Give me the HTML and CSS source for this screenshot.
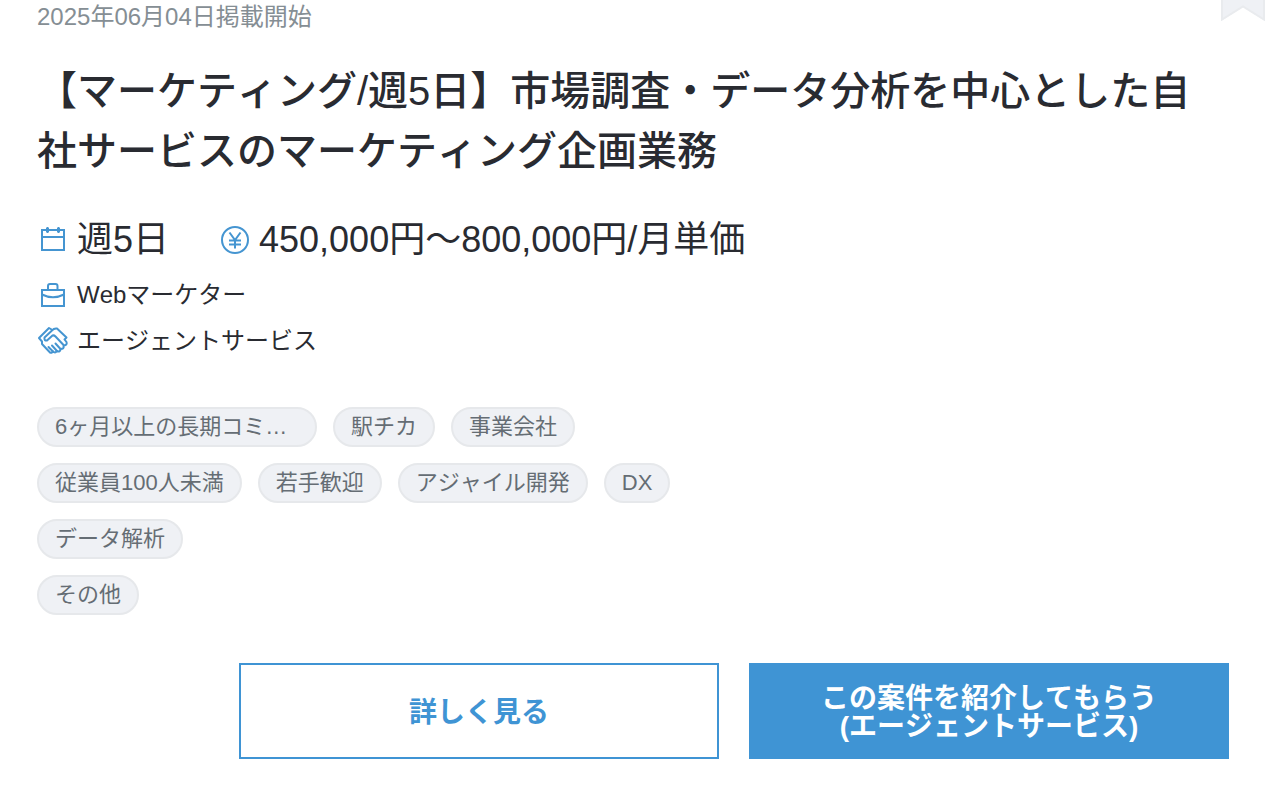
FILE: index.html
```html
<!DOCTYPE html>
<html lang="ja">

<head>
    <meta charset="UTF-8">
    <meta name="viewport" content="width=device-width, initial-scale=1.0">
    <title>【マーケティング/週5日】市場調査・データ分析を中心とした自社サービスのマーケティング企画業務</title>
    <link rel="stylesheet" href="styles.css">
</head>

<body>
    <article class="job-card">
        <header class="job-header">
            <p class="job-date">2025年06月04日掲載開始</p>
            <button type="button" class="bookmark" aria-label="お気に入り">
                <svg width="44" height="21" viewBox="0 0 44 21">
                    <path d="M0 0H44V21L22 7L0 21Z" fill="#eff1f5" />
                    <path d="M1 0V19.500L22 6.500L43 19.500V0" fill="none" stroke="#e9ebee" stroke-width="2" />
                </svg>
            </button>
        </header>

        <div class="job-body">
            <h2 class="job-title">【マーケティング/週5日】市場調査・データ分析を中心とした自社サービスのマーケティング企画業務</h2>

            <div class="job-info">
                <div class="info-row large">
                    <div class="info-item">
                        <svg class="icon" viewBox="0 0 32 32">
                            <path d="M5 6H27V26H5ZM5 13H27M10.500 3V9M21.500 3V9" />
                            <path d="M10.500 4V8M21.500 4V8" stroke-width="3" />
                        </svg>
                        <span>週5日</span>
                    </div>
                    <div class="info-item">
                        <svg class="icon" viewBox="0 0 32 32">
                            <circle cx="16" cy="16" r="13" />
                            <path d="M10.500 8.500L16 16L21.500 8.500M16 16V24.500M10 16.500H22M10 20.500H22" />
                        </svg>
                        <span>450,000円〜800,000円/月単価</span>
                    </div>
                </div>
                <div class="info-row">
                    <div class="info-item">
                        <svg class="icon" viewBox="0 0 32 32">
                            <path d="M5 11H27V27H5ZM11 11V7Q11 5 13 5H18.500Q20.500 5 20.500 7V11M5 15.500Q16 21 27 15.500" />
                        </svg>
                        <span>Webマーケター</span>
                    </div>
                </div>
                <div class="info-row">
                    <div class="info-item">
                        <svg class="icon handshake" viewBox="0 0 32 32">
                            <path d="M15.500 5L12 3L2 13L5 16.500L5 19L13 27.500Q15.500 28.500 15.500 26Q18.500 29 19.500 26Q23.500 27.500 23.500 24Q27.500 24 26.500 21L27 20.500Q30.500 20 29.500 17L27.500 14.500L29.500 12.500L20 3.500Q17 3 15 5.500L7.500 12.500Q7 16 10 15.500L15.500 10.500Q17 10 18.500 11.500L27 20.500" />
                            <path d="M11.500 22L15.500 26M15 20.500L20 26M18.500 18.500L23.500 24" />
                        </svg>
                        <span>エージェントサービス</span>
                    </div>
                </div>
            </div>

            <div class="tags">
                <ul class="tag-list">
                    <li class="tag tag-clipped">6ヶ月以上の長期コミ…</li>
                    <li class="tag">駅チカ</li>
                    <li class="tag">事業会社</li>
                    <li class="tag">従業員100人未満</li>
                    <li class="tag">若手歓迎</li>
                    <li class="tag">アジャイル開発</li>
                    <li class="tag">DX</li>
                    <li class="tag">データ解析</li>
                </ul>
                <ul class="tag-list">
                    <li class="tag">その他</li>
                </ul>
            </div>

            <div class="actions">
                <a href="#" class="btn btn-outline">詳しく見る</a>
                <a href="#" class="btn btn-primary">この案件を紹介してもらう<br>(エージェントサービス)</a>
            </div>
        </div>
    </article>
</body>

</html>
```
FILE: styles.css
```css
* {
    margin: 0;
    padding: 0;
    box-sizing: border-box;
}

body {
    background: #fff;
    color: #292b31;
    font-family: "Liberation Sans", "Noto Sans CJK JP", sans-serif;
    font-size: 24px;
    font-kerning: none;
}

.job-header {
    display: flex;
    justify-content: space-between;
    align-items: flex-start;
    padding: 0 5px 0 37px;
}

.job-date {
    color: #858e94;
    line-height: 33px;
}

.bookmark {
    border: none;
    background: none;
    cursor: pointer;
}

.bookmark svg {
    display: block;
}

.job-body {
    padding: 28px 41px 40px 37px;
}

.job-title {
    font-size: 40px;
    font-weight: 500;
    line-height: 60px;
}

/* 稼働日数・単価・職種 */
.job-info {
    display: flex;
    flex-direction: column;
    gap: 10px;
    margin-top: 32px;
}

.info-row {
    display: flex;
    flex-wrap: wrap;
    gap: 50px;
    line-height: 36px;
}

.info-row.large {
    font-size: 36px;
    line-height: 54px;
}

.info-item {
    display: flex;
    align-items: center;
    gap: 8px;
}

.icon {
    width: 32px;
    height: 32px;
    flex-shrink: 0;
    fill: none;
    stroke: #4595d1;
    stroke-width: 2;
}

.handshake {
    stroke-linejoin: round;
    stroke-linecap: round;
}

/* タグ */
.tags {
    display: flex;
    flex-direction: column;
    gap: 16px;
    max-width: 720px;
    margin-top: 48px;
}

.tag-list {
    display: flex;
    flex-wrap: wrap;
    gap: 16px;
    list-style: none;
}

.tag {
    padding: 0 16px;
    border: 2px solid #e6e8eb;
    border-radius: 20px;
    background: #eff1f5;
    color: #656d74;
    font-size: 22px;
    line-height: 36px;
}

.tag-clipped {
    width: 280px;
    white-space: nowrap;
}

/* ボタン */
.actions {
    display: flex;
    justify-content: flex-end;
    gap: 30px;
    margin-top: 48px;
}

.btn {
    display: flex;
    align-items: center;
    justify-content: center;
    width: 100%;
    max-width: 480px;
    min-height: 96px;
    padding-top: 4px;
    border: 2px solid #3f94d4;
    font-size: 28px;
    font-weight: 700;
    line-height: 28px;
    text-align: center;
    text-decoration: none;
}

.btn-outline {
    background: #fff;
    color: #3f94d4;
}

.btn-primary {
    background: #3f94d4;
    color: #fff;
}
```
